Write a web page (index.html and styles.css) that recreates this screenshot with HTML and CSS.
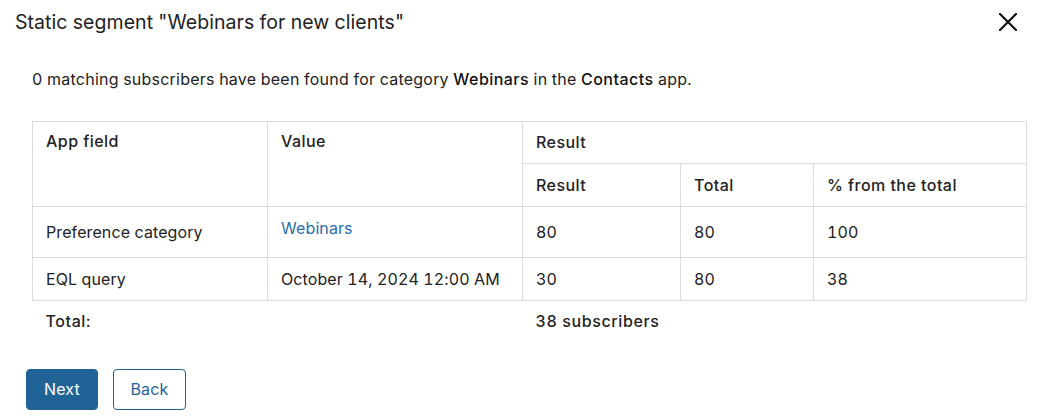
FILE: index.html
```html
<!DOCTYPE html>
<html>
<head>
<meta charset="utf-8">
<link rel="stylesheet" href="styles.css">
</head>
<body>
<div class="dialog">
  <header class="head">
    <h1 class="title">Static segment "Webinars for new clients"</h1>
    <button class="close" aria-label="Close">
      <svg width="18" height="18" viewBox="0 0 18 18"><path d="M1 1L17 17M17 1L1 17" stroke="#111" stroke-width="2.2" stroke-linecap="square"/></svg>
    </button>
  </header>
  <div class="body">
    <p class="desc">0 matching subscribers have been found for category <b>Webinars</b> in the <b>Contacts</b> app.</p>
    <table class="grid">
      <colgroup>
        <col class="c1"><col class="c2"><col class="c3"><col class="c4"><col class="c5">
      </colgroup>
      <thead>
        <tr class="r1">
          <th rowspan="2" class="top">App field</th>
          <th rowspan="2" class="top">Value</th>
          <th colspan="3">Result</th>
        </tr>
        <tr class="r2">
          <th>Result</th><th>Total</th><th>% from the total</th>
        </tr>
      </thead>
      <tbody>
        <tr class="r3">
          <td>Preference category</td>
          <td class="lnk"><a href="#">Webinars</a></td>
          <td>80</td><td>80</td><td>100</td>
        </tr>
        <tr class="r4">
          <td>EQL query</td>
          <td>October 14, 2024 12:00 AM</td>
          <td>30</td><td>80</td><td>38</td>
        </tr>
      </tbody>
      <tfoot>
        <tr class="r5">
          <td>Total:</td><td></td><td colspan="3">38 subscribers</td>
        </tr>
      </tfoot>
    </table>
    <div class="actions">
      <button class="btn primary">Next</button>
      <button class="btn secondary">Back</button>
    </div>
  </div>
</div>
</body>
</html>
```
FILE: styles.css
```css
* { box-sizing: border-box; }
html, body { margin: 0; background: #fff; }
body {
  font-family: Inter, "Noto Sans", sans-serif;
  color: #222;
  font-size: 16px;
  font-variant-numeric: tabular-nums;
}
.dialog { width: 1043px; height: 417px; }
.head {
  display: flex;
  justify-content: space-between;
  align-items: center;
  padding: 10px 26px 0 15px;
  height: 34px;
}
.title {
  margin: 0;
  font-size: 19.5px;
  font-weight: 400;
  color: #222;
  line-height: 24px;
  letter-spacing: 0.05px;
}
.close {
  border: 0;
  background: none;
  padding: 0;
  width: 18px;
  height: 18px;
  display: flex;
}
.body { padding: 0 17px 0 32px; }
.desc {
  margin: 33px 0 0;
  line-height: 24px;
  color: #222;
  letter-spacing: 0.22px;
}
.desc b { font-weight: 500; color: #111; letter-spacing: 0.45px; }
.grid {
  margin-top: 30px;
  border-collapse: collapse;
  width: 994px;
  table-layout: fixed;
}
.c1 { width: 235px; }
.c2 { width: 255px; }
.c3 { width: 158px; }
.c4 { width: 133px; }
.c5 { width: 213px; }
.grid th, .grid td {
  border: 1px solid #dcdcdc;
  padding: 0 13px 1px;
  text-align: left;
  line-height: 20px;
  vertical-align: middle;
  white-space: nowrap;
}
.grid th { font-weight: 500; color: #222; letter-spacing: 0.45px; }
.grid td { font-weight: 400; color: #222; letter-spacing: 0.1px; }
.grid th.top { vertical-align: top; padding-top: 9px; }
.r1 { height: 42px; }
.r2 { height: 43px; }
.r3 { height: 51px; }
.r4 { height: 43px; }
.r5 { height: 42px; }
.grid td.lnk { padding-bottom: 9px; }
.grid a { color: #2a6ea8; text-decoration: none; }
.grid tfoot td { border: 0; font-weight: 500; letter-spacing: 0.6px; padding-bottom: 2px; }
.actions {
  display: flex;
  gap: 15px;
  margin-top: 26px;
  margin-left: -6px;
}
.btn {
  font-family: Inter, "Noto Sans", sans-serif;
  font-size: 16px;
  height: 41px;
  border-radius: 4px;
  padding: 0;
  cursor: pointer;
  letter-spacing: 0.2px;
}
.primary {
  background: #1f6397;
  color: #fff;
  border: 1px solid #1f6397;
  width: 72px;
}
.secondary {
  background: #fff;
  color: #1f6397;
  border: 1px solid #1f6397;
  width: 73px;
}
```
